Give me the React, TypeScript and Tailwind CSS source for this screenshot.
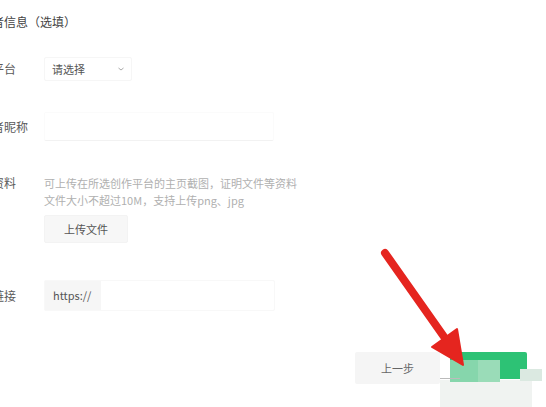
import React from "react";

const font = { fontFamily: '"Noto Sans CJK SC", "Noto Sans", sans-serif' };

function Label({ text }: { text: string }) {
  return (
    <div className="w-[76px] shrink-0 text-[12px] leading-[16px] text-[#5a5a5a] whitespace-nowrap">
      {text}
    </div>
  );
}

export default function App() {
  return (
    <div
      className="relative w-[546px] h-[407px] overflow-hidden bg-white"
      style={font}
    >
      <div className="ml-[-32px] pt-[14px] flex flex-col">
        <div className="text-[12px] leading-[16px] text-[#444] whitespace-nowrap">
          创作者信息（选填）
        </div>

        <div className="mt-[27px] flex items-center h-[24px]">
          <Label text="创作平台" />
          <div className="w-[88px] h-[24px] border border-[#f6f6f6] rounded-[2px] flex items-center justify-between pl-[7px] pr-[6px]">
            <span className="text-[11px] text-[#555]">请选择</span>
            <svg width="8" height="6" viewBox="0 0 8 6">
              <path d="M1.5 2l2.5 2 2.5-2" stroke="#aaa" strokeWidth="1" fill="none" />
            </svg>
          </div>
        </div>

        <div className="mt-[31px] flex items-center h-[29px]">
          <Label text="创作者昵称" />
          <div className="w-[230px] h-[29px] border border-[#fbfbfb] border-b-[#f2f2f2] rounded-[2px]" />
        </div>

        <div className="mt-[34px] flex items-start">
          <Label text="证明资料" />
          <div className="flex flex-col">
            <div className="text-[11px] leading-[17px] text-[#b0b0b0] whitespace-nowrap">
              可上传在所选创作平台的主页截图，证明文件等资料
            </div>
            <div className="text-[11px] leading-[17px] text-[#b0b0b0] whitespace-nowrap">
              文件大小不超过10M，支持上传png、jpg
            </div>
            <div className="mt-[6px] w-[84px] h-[28px] bg-[#f7f7f7] border border-[#f3f3f3] rounded-[2px] flex items-center justify-center text-[11px] text-[#555]">
              上传文件
            </div>
          </div>
        </div>

        <div className="mt-[37px] flex items-center h-[31px]">
          <Label text="主页链接" />
          <div className="w-[231px] h-[31px] border border-[#f8f8f8] rounded-[2px] flex items-center">
            <div className="h-full w-[56px] bg-[#f6f6f6] flex items-center">
              <span className="pl-[8px] text-[11px] text-[#555]">https://</span>
            </div>
          </div>
        </div>

        <div className="mt-[41px] flex justify-end items-start gap-[10px] pr-[19px]">
          <div className="w-[85px] h-[32px] bg-[#f5f5f5] rounded-[2px] flex items-center justify-center text-[11px] text-[#666]">
            上一步
          </div>
          <div className="w-[77px] h-[27px] bg-[#2dc275] rounded-[2px]" />
        </div>
      </div>

      {/* mosaic overlay */}
      <div className="absolute left-[440px] top-[380px] w-[92px] h-[27px] bg-[#f0f3f1]" />
      <div className="absolute left-[450px] top-[360px] w-[50px] h-[22px] bg-[#86d6ac]" />
      <div className="absolute left-[478px] top-[360px] w-[22px] h-[22px] bg-[#9adcb8]" />
      <div className="absolute left-[520px] top-[369px] w-[22px] h-[12px] bg-[#dbe9e1]" />
      <div className="absolute left-[440px] top-[378px] w-[20px] h-[1px] bg-[#bbbbbb]" />

      {/* red arrow annotation */}
      <svg
        className="absolute left-0 top-0"
        width="546"
        height="407"
        viewBox="0 0 546 407"
      >
        <line
          x1="385"
          y1="253"
          x2="447"
          y2="341"
          stroke="#e5251f"
          strokeWidth="8"
          strokeLinecap="round"
        />
        <polygon points="463,365 432,347 457,329" fill="#e5251f" stroke="#e5251f" strokeWidth="2" strokeLinejoin="round" />
      </svg>
    </div>
  );
}
